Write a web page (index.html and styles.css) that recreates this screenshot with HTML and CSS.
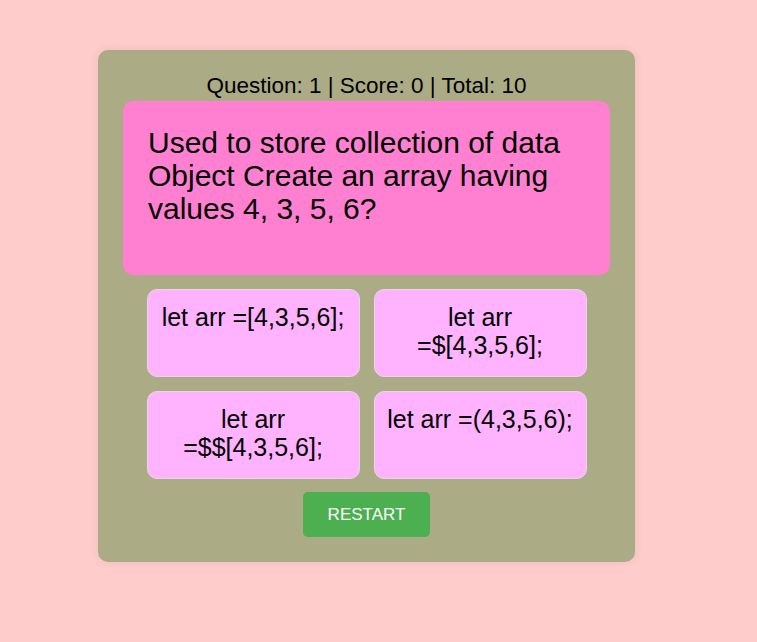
FILE: index.html
```html
<!DOCTYPE html>
<html>
<head>
<meta charset="utf-8">
<link rel="stylesheet" href="styles.css">
</head>
<body>
<div class="quiz">
  <div class="status">Question: 1 | Score: 0 | Total: 10</div>
  <div class="question">Used to store collection of data Object Create an array having values 4, 3, 5, 6?</div>
  <div class="answers">
    <button class="answer">let arr =[4,3,5,6];</button>
    <button class="answer">let arr =$[4,3,5,6];</button>
    <button class="answer">let arr =$$[4,3,5,6];</button>
    <button class="answer">let arr =(4,3,5,6);</button>
  </div>
  <div class="actions">
    <button class="restart">RESTART</button>
  </div>
</div>
</body>
</html>
```
FILE: styles.css
```css
html, body {
  margin: 0;
  padding: 0;
}
body {
  background: #ffcccc;
  font-family: "Liberation Sans", Arial, sans-serif;
  color: #000;
  min-height: 642px;
  padding-top: 50px;
  box-sizing: border-box;
}
.quiz {
  width: 537px;
  margin-left: 98px;
  box-sizing: border-box;
  background: #abab86;
  border-radius: 10px;
  box-shadow: 0 0 10px rgba(0, 0, 0, 0.08);
  padding: 23px 25px 25px;
}
.status {
  text-align: center;
  font-size: 22.5px;
  line-height: 26px;
  margin-bottom: 2px;
}
.question {
  background: #ff80d0;
  border-radius: 10px;
  height: 174px;
  box-sizing: border-box;
  padding: 25px 25px;
  font-size: 30px;
  line-height: 33px;
}
.answers {
  display: grid;
  grid-template-columns: 213px 213px;
  gap: 14px;
  justify-content: center;
  margin-top: 14px;
}
.answer {
  height: 88px;
  box-sizing: border-box;
  background: #ffb3ff;
  border: 1px solid #e4d8e4;
  border-radius: 10px;
  font-family: "Liberation Sans", Arial, sans-serif;
  font-size: 25px;
  line-height: 28px;
  color: #000;
  padding: 13px 10px;
  text-align: center;
  display: flex;
  align-items: flex-start;
  justify-content: center;
}
.actions {
  display: flex;
  justify-content: center;
  margin-top: 13px;
}
.restart {
  background: #4caf50;
  color: #fff;
  border: none;
  border-radius: 5px;
  font-family: "Liberation Sans", Arial, sans-serif;
  font-size: 17px;
  line-height: 19px;
  padding: 13px 0;
  width: 127px;
  height: 45px;
}
```
